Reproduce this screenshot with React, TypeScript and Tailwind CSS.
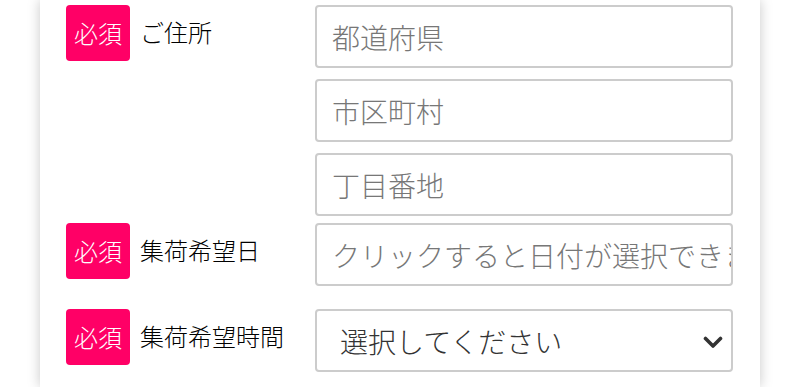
import React from "react";

const font = { fontFamily: '"Noto Sans CJK JP", "Noto Sans", sans-serif' };

function Badge() {
  return (
    <div className="flex h-[56px] w-[64px] shrink-0 items-center justify-center rounded-[4px] bg-[#ff0066] text-[24px] font-light leading-none text-white">
      必須
    </div>
  );
}

function Label({ text }: { text: string }) {
  return (
    <div className="flex w-[249px] shrink-0 items-start">
      <Badge />
      <span className="ml-[10px] flex h-[54px] items-center text-[24px] font-light leading-none text-black">
        {text}
      </span>
    </div>
  );
}

const inputCls =
  "block h-[63px] w-[418px] rounded-[4px] border-2 border-[#cccccc] bg-white pl-[15px] pr-0 text-[28px] font-light text-[#333] outline-none placeholder:text-[#777777]";

export default function App() {
  return (
    <div className="min-h-[387px] w-[800px] bg-white" style={font}>
      <div className="mx-[40px] h-[387px] overflow-hidden bg-white pl-[26px] pt-[5px] shadow-[0_0_12px_rgba(0,0,0,0.22)]">
        <div className="flex">
          <Label text="ご住所" />
          <div className="flex flex-col gap-[11px]">
            <input className={inputCls} placeholder="都道府県" />
            <input className={inputCls} placeholder="市区町村" />
            <input className={inputCls} placeholder="丁目番地" />
          </div>
        </div>
        <div className="mt-[7px] flex">
          <Label text="集荷希望日" />
          <input className={inputCls} placeholder="クリックすると日付が選択できます" />
        </div>
        <div className="mt-[23px] flex">
          <Label text="集荷希望時間" />
          <div className="relative h-[63px] w-[418px]">
            <select className="block h-[63px] w-[418px] appearance-none rounded-[4px] border-2 border-[#cccccc] bg-white pl-[23px] text-[28px] font-light text-[#333] outline-none">
              <option>選択してください</option>
            </select>
            <svg
              className="pointer-events-none absolute right-[10px] top-[27px]"
              width="20"
              height="13"
              viewBox="0 0 20 13"
            >
              <path d="M2.5 2.5 L10 10 L17.5 2.5" fill="none" stroke="#333" strokeWidth="3.6" strokeLinecap="round" strokeLinejoin="round" />
            </svg>
          </div>
        </div>
      </div>
    </div>
  );
}
